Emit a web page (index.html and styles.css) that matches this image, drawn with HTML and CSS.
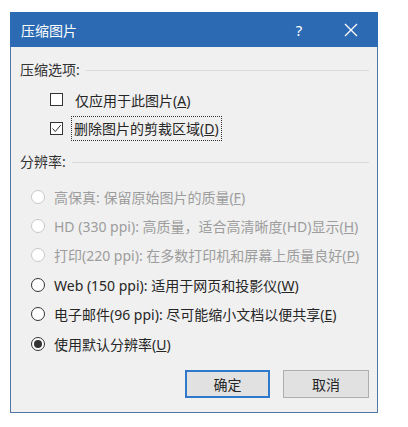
FILE: index.html
```html
<!DOCTYPE html>
<html lang="zh-CN">
<head>
<meta charset="utf-8">
<link rel="stylesheet" href="styles.css">
</head>
<body>
<div class="dialog">
  <div class="titlebar">
    <span class="title">压缩图片</span>
    <span class="help">?</span>
    <span class="close"><svg width="14" height="14" viewBox="0 0 14 14"><path d="M1 1 L13 13 M13 1 L1 13" stroke="#fff" stroke-width="1.3" fill="none"/></svg></span>
  </div>
  <div class="content">
    <div class="group-head"><span>压缩选项:</span><span class="rule"></span></div>
    <div class="row check-row">
      <span class="checkbox"></span>
      <span class="label">仅应用于此图片(<u>A</u>)</span>
    </div>
    <div class="row check-row">
      <span class="checkbox"><svg width="11" height="11" viewBox="0 0 11 11"><path d="M1.5 5.5 L4.3 8.5 L9.8 2" stroke="#333" stroke-width="1" fill="none"/></svg></span>
      <span class="label focus">删除图片的剪裁区域(<u>D</u>)</span>
    </div>
    <div class="group-head second"><span>分辨率:</span><span class="rule"></span></div>
    <div class="row radio-row disabled">
      <span class="radio"></span>
      <span class="label">高保真: 保留原始图片的质量(<u>F</u>)</span>
    </div>
    <div class="row radio-row disabled">
      <span class="radio"></span>
      <span class="label">HD (330 ppi): 高质量，适合高清晰度(HD)显示(<u>H</u>)</span>
    </div>
    <div class="row radio-row disabled">
      <span class="radio"></span>
      <span class="label">打印(220 ppi): 在多数打印机和屏幕上质量良好(<u>P</u>)</span>
    </div>
    <div class="row radio-row">
      <span class="radio"></span>
      <span class="label">Web (150 ppi): 适用于网页和投影仪(<u>W</u>)</span>
    </div>
    <div class="row radio-row">
      <span class="radio"></span>
      <span class="label">电子邮件(96 ppi): 尽可能缩小文档以便共享(<u>E</u>)</span>
    </div>
    <div class="row radio-row">
      <span class="radio checked"></span>
      <span class="label">使用默认分辨率(<u>U</u>)</span>
    </div>
    <div class="buttons">
      <button class="btn default">确定</button>
      <button class="btn">取消</button>
    </div>
  </div>
</div>
</body>
</html>
```
FILE: styles.css
```css
* { box-sizing: border-box; }
body {
  margin: 0;
  background: #fff;
  font-family: "Noto Sans", "Noto Sans CJK SC", sans-serif;
  font-size: 14px;
  color: #262626;
}
.dialog {
  margin: 12px 0 0 10px;
  width: 368px;
  height: 401px;
  border: 1px solid #4f77a5;
  background: #f0f0f0;
  display: flex;
  flex-direction: column;
}
.titlebar {
  height: 35px;
  background: #2c6bb3;
  color: #fff;
  display: flex;
  align-items: center;
  margin: -1px -1px 0 -1px;
  padding-left: 11px;
}
.title { flex: 1; font-size: 14px; }
.help { width: 20px; text-align: center; margin-right: 35px; font-size: 15px; }
.close { width: 14px; height: 14px; margin-right: 20px; display: flex; }
.content {
  padding: 10px 8px 0 9px;
  display: flex;
  flex-direction: column;
}
.group-head {
  height: 24px;
  display: flex;
  align-items: center;
  gap: 6px;
  color: #333;
}
.group-head.second { margin-top: 6px; }
.rule { flex: 1; height: 1px; background: #d9d9d9; margin-top: 2px; }
.row { display: flex; align-items: center; }
.check-row { height: 29px; padding-left: 30px; }
.group-head + .check-row { margin-top: 4px; }
.checkbox {
  flex-shrink: 0;
  width: 13px; height: 13px;
  border: 1px solid #333;
  background: #fff;
  display: flex; align-items: center; justify-content: center;
  margin-right: 12px;
}
.label { white-space: nowrap; }
.label.focus { outline: 1px dotted #333; outline-offset: 0; padding: 2px 2px; margin-left: -3px; line-height: 19px; }
.group-head.second + .radio-row { margin-top: 9px; }
.radio-row { height: 29.4px; padding-left: 11px; }
.radio {
  flex-shrink: 0;
  width: 14px; height: 14px;
  border: 1px solid #333;
  border-radius: 50%;
  background: #fff;
  margin-right: 9px;
  display: flex; align-items: center; justify-content: center;
}
.radio.checked::after {
  content: "";
  width: 8px; height: 8px;
  border-radius: 50%;
  background: #333;
}
.disabled { color: #9d9d9d; }
.disabled .radio { border-color: #c8c8c8; }
.buttons {
  display: flex;
  justify-content: flex-end;
  gap: 13px;
  margin-top: 12px;
}
.btn {
  width: 86px; height: 28px;
  font-family: inherit;
  font-size: 14px;
  color: #262626;
  background: #e1e1e1;
  border: 1px solid #adadad;
  padding: 0;
}
.btn.default { border: 2px solid #2f79cc; width: 85px; }
```
